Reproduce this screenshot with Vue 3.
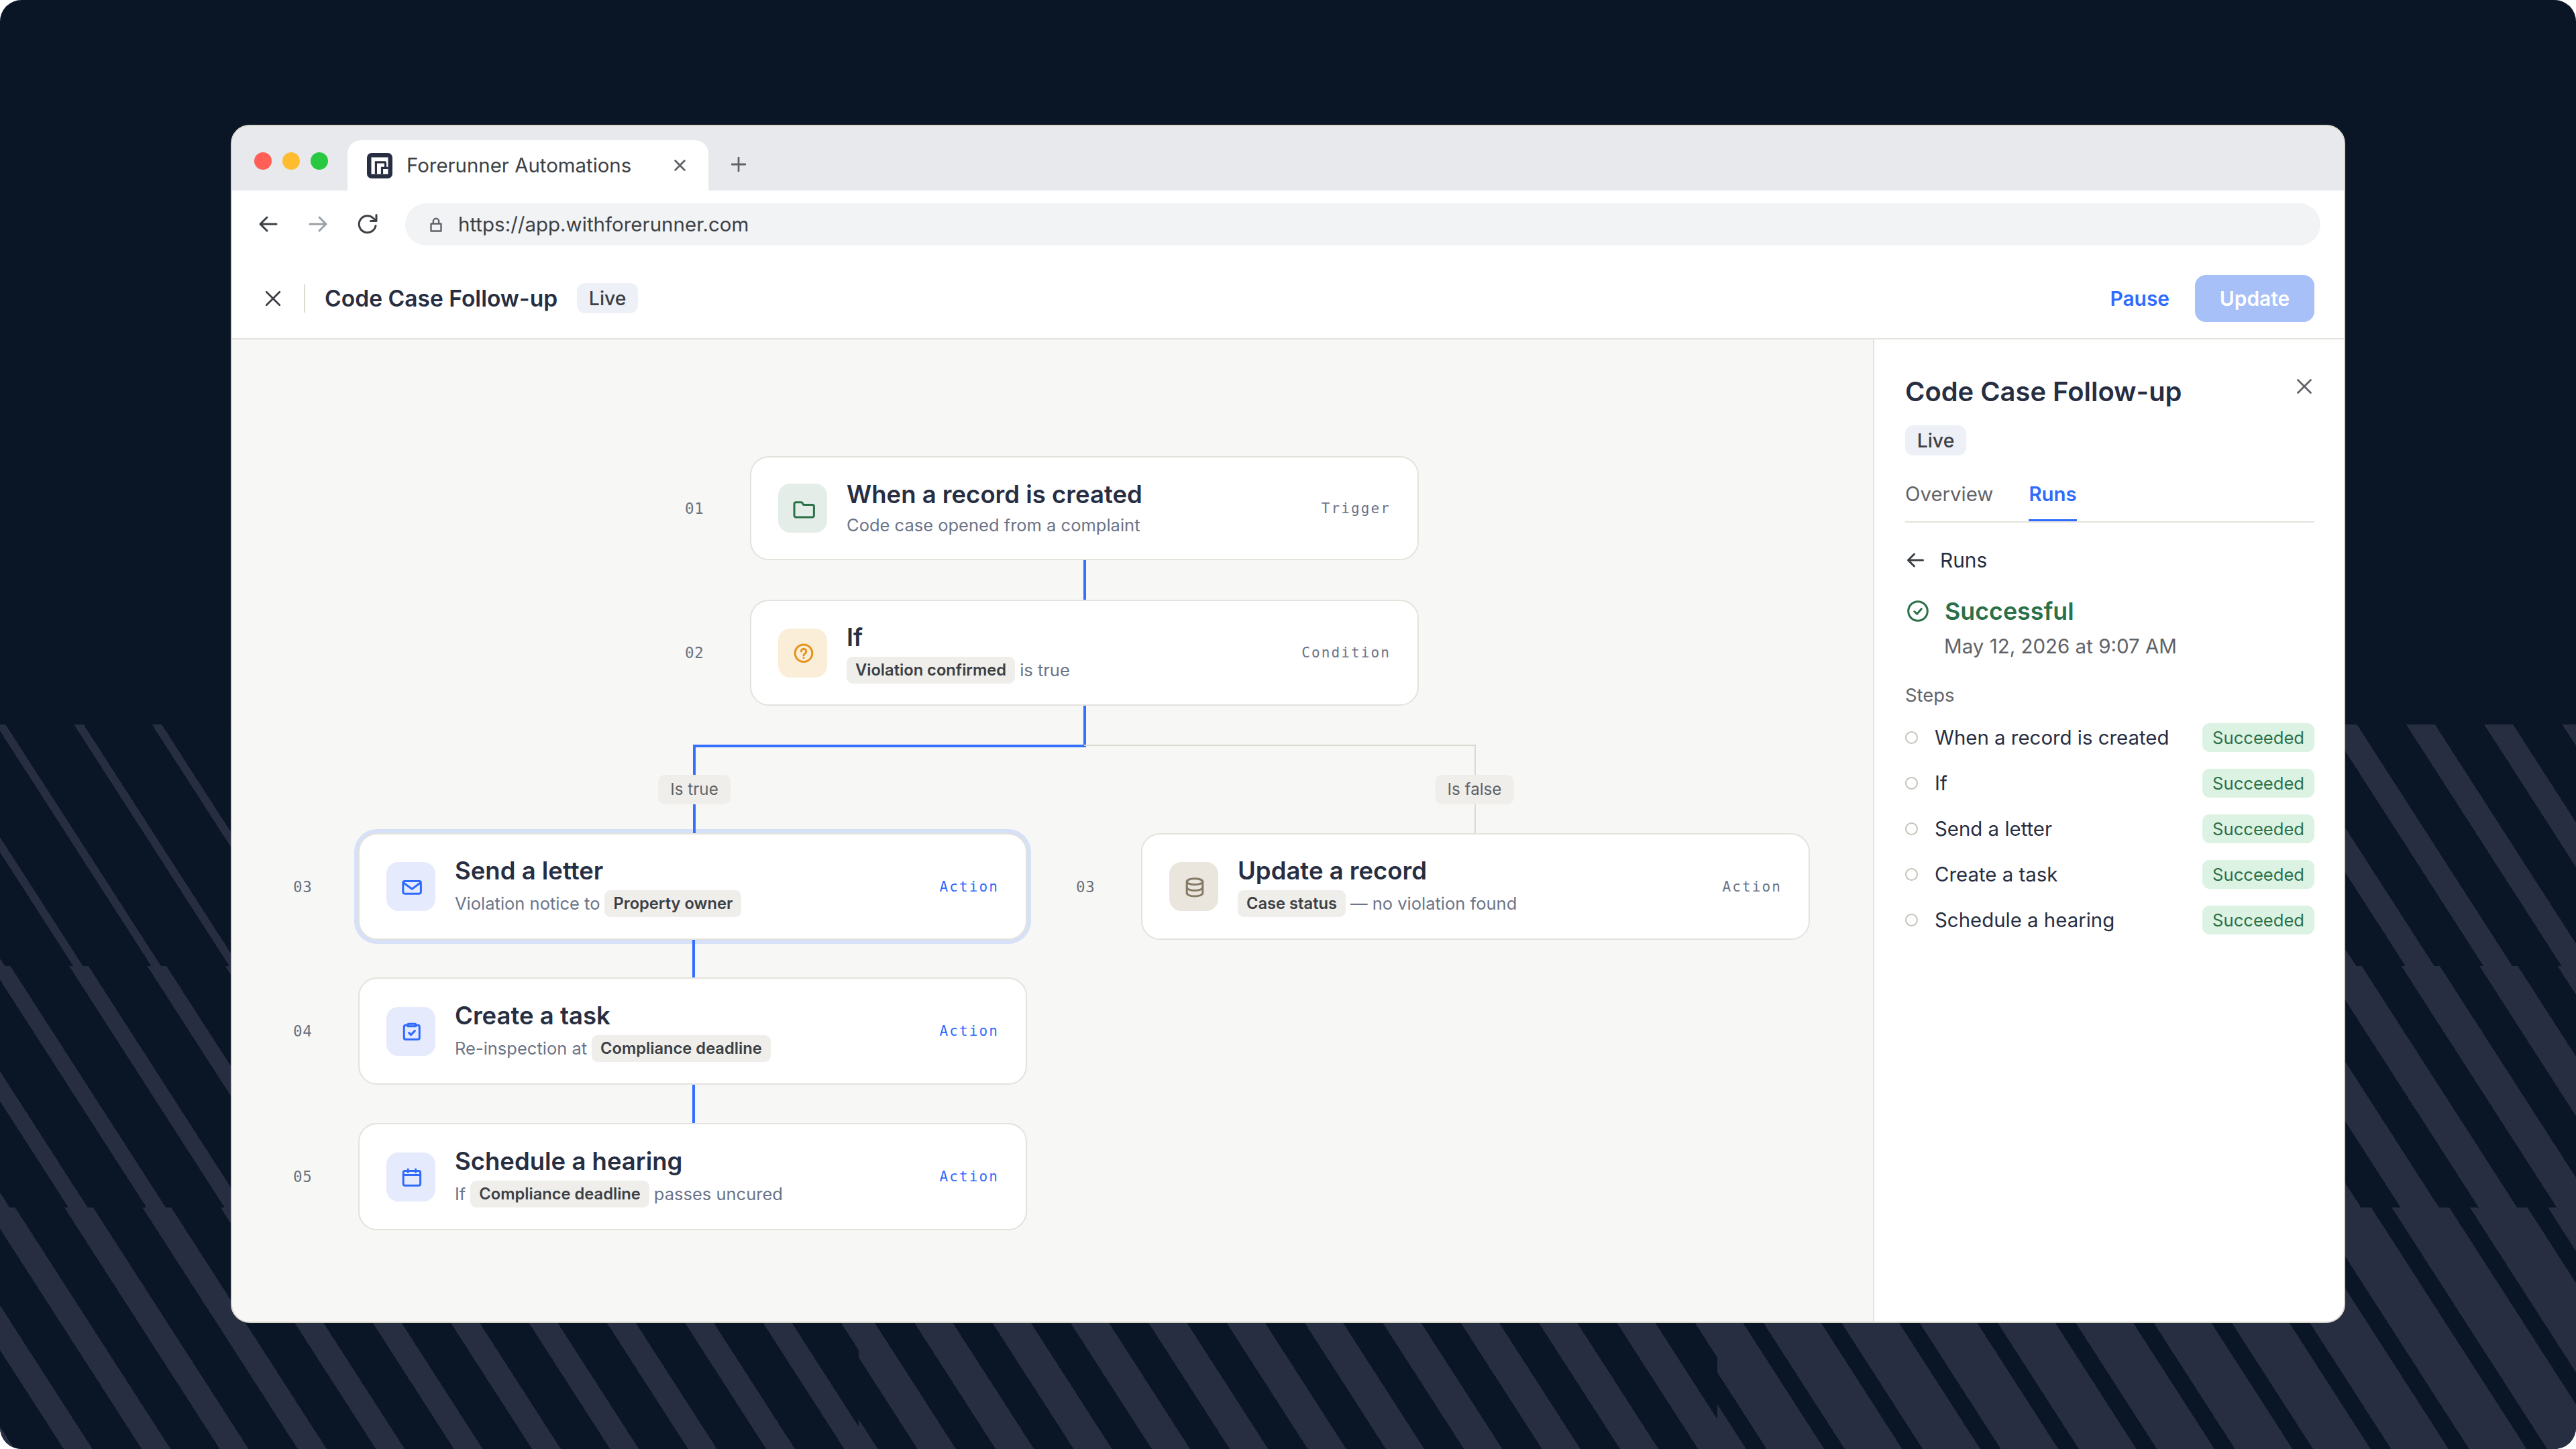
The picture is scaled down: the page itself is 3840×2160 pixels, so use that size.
<script setup>
// width of each diagonal stripe, per tile of the 3x3 backdrop
const tiles = [12, 24, 36, 24, 36, 48, 36, 48, 72];

const icons = {
  folder: ["M5 11.2a2.5 2.5 0 0 1 2.5-2.500h7.600a2.500 2.500 0 0 1 2.200 1.300l1.200 2.400h13.400a2.500 2.500 0 0 1 2.500 2.500v13.600a2.500 2.500 0 0 1-2.500 2.500H7.500a2.500 2.500 0 0 1-2.500-2.500z"],
  question: [
    "M19 5.900a12.800 12.800 0 1 0 0 25.600a12.800 12.800 0 1 0 0-25.600z",
    "M15.400 16a3.700 3.700 0 1 1 5.600 3.200c-1.300.7-2 1.300-2 2.600",
    "M19 25.200v.3",
  ],
  mail: [
    "M8.400 9.400h21.400a2.600 2.600 0 0 1 2.600 2.600v13.600a2.600 2.600 0 0 1-2.600 2.600H8.400a2.600 2.600 0 0 1-2.600-2.600V12a2.600 2.600 0 0 1 2.600-2.600z",
    "M6.600 12l12.500 9.200L31.600 12",
  ],
  task: [
    "M13.500 9.300H9.800a2.500 2.500 0 0 0-2.500 2.500v16.200a2.500 2.500 0 0 0 2.500 2.500h18a2.500 2.500 0 0 0 2.500-2.500V11.800a2.500 2.500 0 0 0-2.500-2.500h-3.700",
    "M14.200 7.200h9.200a1.300 1.300 0 0 1 1.300 1.300v2.200H12.900V8.500a1.300 1.300 0 0 1 1.300-1.300z",
    "M14.600 20.600l3 3 5.800-6",
  ],
  calendar: [
    "M8.700 9.400h20.400a2.500 2.500 0 0 1 2.500 2.500v16.800a2.500 2.500 0 0 1-2.500 2.500H8.700a2.500 2.500 0 0 1-2.500-2.500V11.900a2.500 2.500 0 0 1 2.500-2.500z",
    "M6.200 15.600h25.400",
    "M13.200 7v4.300",
    "M24.600 7v4.300",
  ],
  database: [
    "M19 5.700c6.600 0 11.800 2 11.800 4.500s-5.200 4.500-11.800 4.500-11.800-2-11.800-4.500 5.200-4.500 11.800-4.500z",
    "M7.200 10.200v17c0 2.600 5.200 4.700 11.800 4.700s11.800-2.100 11.800-4.700v-17",
    "M7.200 18.700c0 2.600 5.200 4.700 11.800 4.700s11.800-2.100 11.800-4.700",
  ],
};

// positions are relative to the canvas
const nodes = [
  { num: "01", title: "When a record is created", parts: [{ text: "Code case opened from a complaint" }], kind: "Trigger", icon: "folder", tone: "green", x: 772, y: 174, h: 155 },
  { num: "02", title: "If", parts: [{ chip: "Violation confirmed" }, { text: "is true" }], kind: "Condition", icon: "question", tone: "amber", x: 772, y: 388, h: 158 },
  { num: "03", title: "Send a letter", parts: [{ text: "Violation notice to" }, { chip: "Property owner" }], kind: "Action", icon: "mail", tone: "blue", x: 188, y: 736, h: 159, selected: true },
  { num: "03", title: "Update a record", parts: [{ chip: "Case status" }, { text: "— no violation found" }], kind: "Action", icon: "database", tone: "sand", x: 1355, y: 736, h: 159 },
  { num: "04", title: "Create a task", parts: [{ text: "Re-inspection at" }, { chip: "Compliance deadline" }], kind: "Action", icon: "task", tone: "blue", x: 188, y: 951, h: 160 },
  { num: "05", title: "Schedule a hearing", parts: [{ text: "If" }, { chip: "Compliance deadline" }, { text: "passes uncured" }], kind: "Action", icon: "calendar", tone: "blue", x: 188, y: 1168, h: 160 },
];

const lines = [
  { x: 1269, y: 329, w: 4, h: 59 },
  { x: 1269, y: 546, w: 4, h: 62 },
  { x: 687, y: 604, w: 586, h: 4 },
  { x: 687, y: 604, w: 4, h: 132 },
  { x: 1270, y: 604, w: 584, h: 2, muted: true },
  { x: 1852, y: 604, w: 2, h: 132, muted: true },
  { x: 686, y: 895, w: 4, h: 56 },
  { x: 686, y: 1111, w: 4, h: 57 },
];

const branches = [
  { label: "Is true", x: 689, y: 671 },
  { label: "Is false", x: 1852, y: 671 },
];

const steps = ["When a record is created", "If", "Send a letter", "Create a task", "Schedule a hearing"];

const px = (o) => ({
  left: o.x + "px",
  top: o.y + "px",
  width: o.w && o.w + "px",
  height: o.h && o.h + "px",
});
</script>

<template>
  <div class="page">
    <div class="backdrop">
      <div v-for="(w, i) in tiles" :key="i" class="tile" :style="{ '--half': w / 2 + 'px' }"></div>
    </div>

    <div class="window">
      <div class="tabbar">
        <div class="lights">
          <span class="light red"></span>
          <span class="light yellow"></span>
          <span class="light green"></span>
        </div>
        <div class="tab">
          <svg class="favicon" viewBox="0 0 38 38">
            <rect width="38" height="38" rx="7" fill="#272e42" />
            <path d="M6.500 6.500h25v25h-25z" fill="#fff" />
            <path d="M13.400 31.500V13.800H28M22.500 31.500V22.300h9M27.500 14v8" stroke="#272e42" stroke-width="3.200" fill="none" />
          </svg>
          <span class="tab-title">Forerunner Automations</span>
          <svg class="tab-close" viewBox="0 0 16 16"><path d="M1.500 1.500l13 13M14.500 1.500l-13 13" /></svg>
        </div>
        <svg class="tab-new" viewBox="0 0 22 22"><path d="M11 1v20M1 11h20" /></svg>
      </div>

      <div class="toolbar">
        <svg class="nav" viewBox="0 0 30 30"><path d="M27 15H3M13 5L3 15l10 10" /></svg>
        <svg class="nav dim" viewBox="0 0 30 30"><path d="M3 15h24M17 5l10 10-10 10" /></svg>
        <svg class="nav" viewBox="0 0 30 30"><path d="M27 17.500a12.500 12.500 0 1 1-3.300-11L28 10.500M28 1.500v9h-8.500" /></svg>
        <div class="url">
          <svg class="lock" viewBox="0 0 20 22"><path d="M2.500 9.500h15v11h-15zM5.800 9.500V6a4.200 4.200 0 0 1 8.400 0v3.500" /></svg>
          <span>https://app.withforerunner.com</span>
        </div>
      </div>

      <header class="app-header">
        <svg class="close" viewBox="0 0 22 22"><path d="M1 1l20 20M21 1L1 21" /></svg>
        <span class="divider"></span>
        <h1>Code Case Follow-up</h1>
        <span class="badge">Live</span>
        <button class="pause">Pause</button>
        <button class="update">Update</button>
      </header>

      <div class="body">
        <main class="canvas">
          <section v-for="n in nodes" :key="n.title" class="node" :class="{ selected: n.selected }" :style="px(n)">
            <span class="num">{{ n.num }}</span>
            <div class="node-icon" :class="n.tone">
              <svg viewBox="0 0 36 36"><path v-for="d in icons[n.icon]" :key="d" :d="d" /></svg>
            </div>
            <div class="node-text">
              <h2>{{ n.title }}</h2>
              <div class="sub">
                <span v-for="(p, i) in n.parts" :key="i" :class="{ chip: p.chip }">{{ p.chip || p.text }}</span>
              </div>
            </div>
            <span class="kind" :class="{ active: n.tone === 'blue' }">{{ n.kind }}</span>
          </section>
          <span v-for="(l, i) in lines" :key="i" class="line" :class="{ muted: l.muted }" :style="px(l)"></span>
          <span v-for="b in branches" :key="b.label" class="branch" :style="px(b)">{{ b.label }}</span>
        </main>

        <aside class="panel">
          <div class="panel-head">
            <h2>Code Case Follow-up</h2>
            <svg class="panel-close" viewBox="0 0 22 22"><path d="M1.500 1.500l19 19M20.500 1.500l-19 19" /></svg>
          </div>
          <span class="badge">Live</span>
          <nav class="tabs">
            <span>Overview</span>
            <span class="current">Runs</span>
          </nav>
          <div class="back">
            <svg viewBox="0 0 26 26"><path d="M24.500 13H2.500M11.500 4l-9 9 9 9" /></svg>
            <span>Runs</span>
          </div>
          <div class="status">
            <svg viewBox="0 0 32 32"><circle cx="16" cy="16" r="14.300" /><path d="M10.800 16.500l3.800 3.700 6.600-7.500" /></svg>
            <span>Successful</span>
          </div>
          <p class="date">May 12, 2026 at 9:07 AM</p>
          <h3>Steps</h3>
          <ul>
            <li v-for="s in steps" :key="s">
              <i class="dot"></i>
              <span class="step">{{ s }}</span>
              <span class="result">Succeeded</span>
            </li>
          </ul>
        </aside>
      </div>
    </div>
  </div>
</template>

<style>
body {
  margin: 0;
  background: #fff;
}
</style>

<style scoped>
.page {
  position: relative;
  box-sizing: border-box;
  width: 3840px;
  height: 2160px;
  padding: 186px 344px 188px;
  border-radius: 32px;
  overflow: hidden;
  background: #0a1626;
  color: #272e42;
  font-family: Inter, sans-serif;
}

.backdrop {
  position: absolute;
  left: 0;
  bottom: 0;
  width: 3840px;
  height: 1080px;
  display: grid;
  grid-template-columns: repeat(3, 1fr);
  grid-template-rows: repeat(3, 1fr);
}

.tile {
  background: repeating-linear-gradient(
    57.24deg,
    #282e41 0 var(--half),
    #0a1626 var(--half) calc(97.85px - var(--half)),
    #282e41 calc(97.85px - var(--half)) 97.85px
  );
}

.window {
  position: relative;
  box-sizing: border-box;
  height: 1786px;
  border: 2px solid #d9d6cc;
  border-radius: 28px;
  overflow: hidden;
  background: #fff;
  display: flex;
  flex-direction: column;
}

svg {
  display: block;
  flex: none;
  fill: none;
  stroke: currentColor;
  stroke-width: 3;
  stroke-linecap: round;
  stroke-linejoin: round;
}

h1,
h2,
h3,
p,
ul {
  margin: 0;
  padding: 0;
}

.tabbar {
  flex: none;
  height: 96px;
  background: #e8e9ed;
  display: flex;
  align-items: flex-end;
}

.lights {
  display: flex;
  gap: 16px;
  margin: 0 29px 31px 33px;
}

.light {
  width: 26px;
  height: 26px;
  border-radius: 50%;
}

.red {
  background: #ff5f57;
}

.yellow {
  background: #febc2e;
}

.light.green {
  background: #28c840;
}

.tab {
  box-sizing: border-box;
  width: 538px;
  height: 75px;
  padding: 0 34px 0 29px;
  border-radius: 20px 20px 0 0;
  background: #fff;
  display: flex;
  align-items: center;
}

.favicon {
  width: 38px;
  height: 38px;
  stroke: none;
  stroke-linecap: butt;
  stroke-linejoin: miter;
}

.tab-title {
  flex: 1;
  margin: 0 0 1px 21px;
  font-size: 29.4px;
  color: #3c4045;
}

.tab-close {
  width: 17px;
  height: 17px;
  color: #5f6368;
  stroke-width: 2.6;
}

.tab-new {
  width: 22px;
  height: 22px;
  margin: 0 0 28px 34px;
  color: #5f6368;
  stroke-width: 2.8;
}

.toolbar {
  flex: none;
  box-sizing: border-box;
  height: 101px;
  padding: 0 35px 0 39px;
  display: flex;
  align-items: center;
  color: #3c4045;
}

.nav {
  width: 30px;
  height: 30px;
  margin: 0 44px 1px 0;
}

.nav:nth-child(3) {
  margin-right: 41px;
}

.dim {
  color: #9aa0a8;
}

.url {
  flex: 1;
  height: 63px;
  padding-left: 36px;
  border-radius: 32px;
  background: #f1f3f5;
  display: flex;
  align-items: center;
  gap: 23px;
  font-size: 29.5px;
}

.url span {
  margin-bottom: 1px;
}

.lock {
  width: 20px;
  height: 22px;
  color: #5f6368;
  stroke-width: 2.4;
}

.app-header {
  flex: none;
  box-sizing: border-box;
  height: 121px;
  padding: 0 44px 0 50px;
  border-bottom: 2px solid #e3e2dc;
  display: flex;
  align-items: center;
}

.close {
  width: 22px;
  height: 22px;
  color: #3c4045;
  stroke-width: 2.8;
}

.divider {
  width: 2px;
  height: 42px;
  margin: 0 29px 0 35px;
  background: #dcd9d0;
}

h1 {
  font-size: 33.6px;
  font-weight: 600;
}

.badge {
  box-sizing: border-box;
  width: 91px;
  height: 45px;
  border-radius: 12px;
  background: #edf1f7;
  color: #3c4045;
  font-size: 28.4px;
  font-weight: 500;
  line-height: 46px;
  text-align: center;
}

h1 + .badge {
  margin-left: 29px;
}

button {
  border: 0;
  background: none;
  font: 600 29.9px Inter, sans-serif;
  padding: 0;
}

.pause {
  margin-left: auto;
  color: #2f6bff;
}

.update {
  width: 178px;
  height: 70px;
  margin-left: 38px;
  border-radius: 16px;
  background: #a7c0f8;
  color: #fff;
}

.body {
  flex: 1;
  display: flex;
}

.canvas {
  position: relative;
  width: 2446px;
  background: #f7f7f5;
}

.line {
  position: absolute;
  background: #3470ff;
}

.muted {
  background: #dcd9d0;
}

.branch {
  position: absolute;
  transform: translate(-50%, -50%);
  padding: 0 18px;
  border-radius: 10px;
  background: #efeeea;
  color: #5f6368;
  font-size: 24.2px;
  line-height: 44px;
  white-space: nowrap;
}

.node {
  position: absolute;
  box-sizing: border-box;
  width: 997px;
  padding: 0 40px;
  border: 2px solid #e3e2dc;
  border-radius: 28px;
  background: #fff;
  display: flex;
  align-items: center;
}

.selected {
  box-shadow: 0 0 0 6px #d6e0f7;
}

.num {
  position: absolute;
  left: -99px;
  font-family: "DejaVu Sans Mono", monospace;
  font-size: 22.5px;
  letter-spacing: 0.8px;
  color: #6b7280;
}

.node-icon {
  flex: none;
  width: 73px;
  height: 73px;
  border-radius: 18px;
  display: flex;
  align-items: center;
  justify-content: center;
}

.node-icon svg {
  width: 36px;
  height: 36px;
}

.node-icon.green {
  background: #e5ede8;
  color: #2a7048;
}

.amber {
  background: #fbeed9;
  color: #e6921c;
}

.blue {
  background: #e5eafc;
  color: #2f6bff;
}

.sand {
  background: #ebe6dd;
  color: #857a66;
}

.node-text {
  flex: 1;
  margin-left: 29px;
}

.node-text h2 {
  font-size: 36.5px;
  font-weight: 600;
  line-height: 44px;
}

.sub {
  margin-top: 7px;
  display: flex;
  align-items: center;
  gap: 7px;
  font-size: 25.5px;
  line-height: 34px;
  color: #6b7488;
}

.chip {
  padding: 0 13px;
  border-radius: 9px;
  background: #efeeea;
  color: #3c4045;
  font-size: 23.7px;
  font-weight: 600;
  line-height: 40px;
}

.kind {
  font-family: "DejaVu Sans Mono", monospace;
  font-size: 21px;
  letter-spacing: 2.1px;
  color: #6b7488;
}

.kind.active {
  color: #2f6bff;
}

.panel {
  box-sizing: border-box;
  width: 702px;
  padding: 54px 44px 0 46px;
  border-left: 2px solid #e3e2dc;
  background: #fff;
  display: flex;
  flex-direction: column;
}

.panel-head {
  display: flex;
  justify-content: space-between;
}

.panel-head h2 {
  font-size: 39.9px;
  font-weight: 600;
  line-height: 48px;
}

.panel-close {
  width: 22px;
  height: 22px;
  margin: 5px 4px 0 0;
  color: #5f6368;
  stroke-width: 2.8;
}

.panel .badge {
  margin-top: 26px;
}

.tabs {
  margin-top: 40px;
  border-bottom: 2px solid #e3e2dc;
  display: flex;
  gap: 53px;
  font-size: 29.4px;
  line-height: 36px;
  color: #5f6368;
}

.tabs span {
  padding-bottom: 19px;
  border-bottom: 3px solid transparent;
}

.tabs .current {
  border-color: #2f6bff;
  color: #2f6bff;
  font-weight: 600;
}

.back {
  margin-top: 38px;
  display: flex;
  align-items: center;
  gap: 24px;
  font-size: 29.8px;
  line-height: 36px;
}

.back svg {
  width: 26px;
  height: 26px;
  margin-left: 2px;
  color: #3c4045;
}

.status {
  margin-top: 36px;
  display: flex;
  align-items: center;
  gap: 24px;
  color: #2a7048;
  font-size: 35.8px;
  font-weight: 600;
  line-height: 44px;
}

.status svg {
  width: 32px;
  height: 32px;
  margin-left: 3px;
}

.date {
  margin: 12px 0 0 58px;
  color: #5f6368;
  font-size: 29.5px;
  line-height: 36px;
}

h3 {
  margin-top: 38px;
  color: #5f6368;
  font-size: 27.4px;
  font-weight: 400;
  line-height: 34px;
}

ul {
  margin-top: 24px;
  list-style: none;
  display: flex;
  flex-direction: column;
  gap: 24px;
}

li {
  display: flex;
  align-items: center;
  height: 44px;
  font-size: 29.4px;
}

.dot {
  box-sizing: border-box;
  width: 19px;
  height: 19px;
  border: 2.5px solid #c5c4bb;
  border-radius: 50%;
}

.step {
  flex: 1;
  margin-left: 25px;
}

.result {
  padding: 0 15px;
  border-radius: 11px;
  background: #dcf2e3;
  color: #2a7048;
  font-size: 25.6px;
  line-height: 43px;
}
</style>
